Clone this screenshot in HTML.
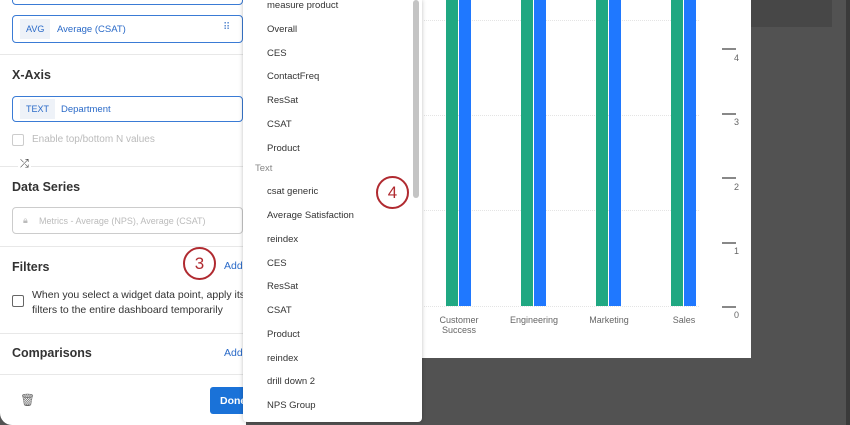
<!DOCTYPE html>
<html><head><style>
*{box-sizing:border-box;margin:0;padding:0}
body{width:850px;height:425px;overflow:hidden;background:#525252;font-family:"Liberation Sans",sans-serif;position:relative}
.abs{position:absolute}
.left{left:0;top:0;width:246px;height:425px;background:#fff;border-bottom-left-radius:12px}
.box{position:absolute;left:12px;width:231px;border:1px solid #3a7bd5;border-radius:4px;background:#fff}
.tag{position:absolute;background:#eef2f8;color:#2a6ac8;font-size:9px;padding:0 6px;line-height:20px}
.blue{color:#2a6ac8;font-size:9.5px}
h3{position:absolute;left:12px;font-size:12.5px;color:#333;font-weight:bold}
.hr{position:absolute;left:0;width:250px;height:1px;background:#e8e8e8}
.dd{left:243px;top:0;width:179px;height:422px;background:#fff;box-shadow:0 0 4px rgba(0,0,0,.25);border-radius:0 0 4px 4px}
.dd div{position:absolute;left:24px;font-size:9.5px;color:#333}
.chart{left:422px;top:0;width:329px;height:358px;background:#fff}
.circ{position:absolute;width:33px;height:33px;border:2px solid #b02a30;border-radius:50%;color:#b02a30;font-size:17px;text-align:center;line-height:29px;background:#fff}
.bar{position:absolute;top:0;height:306px}
.g{background:#1fa882;width:12px}.b{background:#1f78ff;width:12px}
.tick{position:absolute;left:722px;width:14px;height:2px;background:#888}
.yl{position:absolute;left:734px;font-size:9px;color:#666}
.xl{position:absolute;top:315px;font-size:9px;color:#666;text-align:center;width:70px}
.grid{position:absolute;left:424px;width:275px;border-top:1px dotted #e4e4e4}
</style></head><body>
<div class="abs" style="left:751px;top:0;width:81px;height:27px;background:#474747"></div>
<div class="abs" style="left:846px;top:0;width:4px;height:425px;background:#3a3a3a"></div>
<div class="abs chart"></div>
<div class="grid" style="top:20px"></div><div class="grid" style="top:115px"></div><div class="grid" style="top:210px"></div><div class="grid" style="top:306px"></div>
<div class="bar g" style="left:446px"></div><div class="bar b" style="left:459px"></div>
<div class="bar g" style="left:521px"></div><div class="bar b" style="left:534px"></div>
<div class="bar g" style="left:596px"></div><div class="bar b" style="left:609px"></div>
<div class="bar g" style="left:671px"></div><div class="bar b" style="left:684px"></div>
<div class="tick" style="top:48px"></div><div class="yl" style="top:53px">4</div>
<div class="tick" style="top:113px"></div><div class="yl" style="top:117px">3</div>
<div class="tick" style="top:177px"></div><div class="yl" style="top:182px">2</div>
<div class="tick" style="top:242px"></div><div class="yl" style="top:246px">1</div>
<div class="tick" style="top:306px"></div><div class="yl" style="top:310px">0</div>
<div class="xl" style="left:424px">Customer<br>Success</div>
<div class="xl" style="left:499px">Engineering</div>
<div class="xl" style="left:574px">Marketing</div>
<div class="xl" style="left:649px">Sales</div>

<div class="abs left">
<div class="box" style="top:-5px;height:10px"></div>
<div class="box" style="top:15px;height:28px"><span class="tag" style="left:7px;top:3px">AVG</span><span class="blue abs" style="left:44px;top:8px">Average (CSAT)</span><span class="abs" style="left:210px;top:6px;color:#5a8ad0;font-size:10px">⠿</span></div>
<div class="hr" style="top:54px"></div>
<h3 style="top:68px">X-Axis</h3>
<div class="box" style="top:96px;height:26px"><span class="tag" style="left:7px;top:2px">TEXT</span><span class="blue abs" style="left:48px;top:7px">Department</span></div>
<div class="abs" style="left:12px;top:134px;width:12px;height:12px;border:1px solid #ccc;border-radius:2px"></div>
<div class="abs" style="left:32px;top:134px;font-size:10px;color:#bbb">Enable top/bottom N values</div>
<div class="hr" style="top:166px"></div>
<div class="abs" style="left:18px;top:158px;font-size:11px;color:#444;background:#fff;padding:0 2px">⤮</div>
<h3 style="top:180px">Data Series</h3>
<div class="box" style="top:207px;height:27px;border-color:#ccc"><span class="abs" style="left:10px;top:7px;font-size:9px;color:#bbb">🔒︎</span><span class="abs" style="left:26px;top:8px;font-size:9px;color:#bbb">Metrics - Average (NPS), Average (CSAT)</span></div>
<div class="hr" style="top:246px"></div>
<h3 style="top:260px">Filters</h3>
<div class="abs blue" style="left:224px;top:260px;font-size:10.5px">Add</div>
<div class="abs" style="left:12px;top:295px;width:12px;height:12px;border:1px solid #666;border-radius:2px"></div>
<div class="abs" style="left:32px;top:288px;font-size:10.5px;color:#333;line-height:15px;width:230px">When you select a widget data point, apply its<br>filters to the entire dashboard temporarily</div>
<div class="hr" style="top:333px"></div>
<h3 style="top:346px">Comparisons</h3>
<div class="abs blue" style="left:224px;top:347px;font-size:10.5px">Add</div>
<div class="hr" style="top:374px"></div>
<div class="abs" style="left:20px;top:393px;font-size:12px;color:#666">🗑︎</div>
<div class="abs" style="left:210px;top:387px;width:50px;height:27px;background:#1a72d8;border-radius:3px;color:#fff;font-size:10.5px;font-weight:bold;padding:8px 0 0 10px">Done</div>
</div>
<div class="circ" style="left:183px;top:247px">3</div>

<div class="abs dd">
<div style="top:0">measure product</div>
<div style="top:24px">Overall</div>
<div style="top:48px">CES</div>
<div style="top:71px">ContactFreq</div>
<div style="top:95px">ResSat</div>
<div style="top:119px">CSAT</div>
<div style="top:143px">Product</div>
<div style="top:163px;left:12px;color:#888">Text</div>
<div style="top:186px">csat generic</div>
<div style="top:210px">Average Satisfaction</div>
<div style="top:234px">reindex</div>
<div style="top:258px">CES</div>
<div style="top:281px">ResSat</div>
<div style="top:305px">CSAT</div>
<div style="top:329px">Product</div>
<div style="top:353px">reindex</div>
<div style="top:376px">drill down 2</div>
<div style="top:400px">NPS Group</div>
<span class="abs" style="left:170px;top:0;width:6px;height:198px;background:#c4c4c4;border-radius:3px"></span>
</div>
<div class="circ" style="left:376px;top:176px">4</div>
</body></html>
